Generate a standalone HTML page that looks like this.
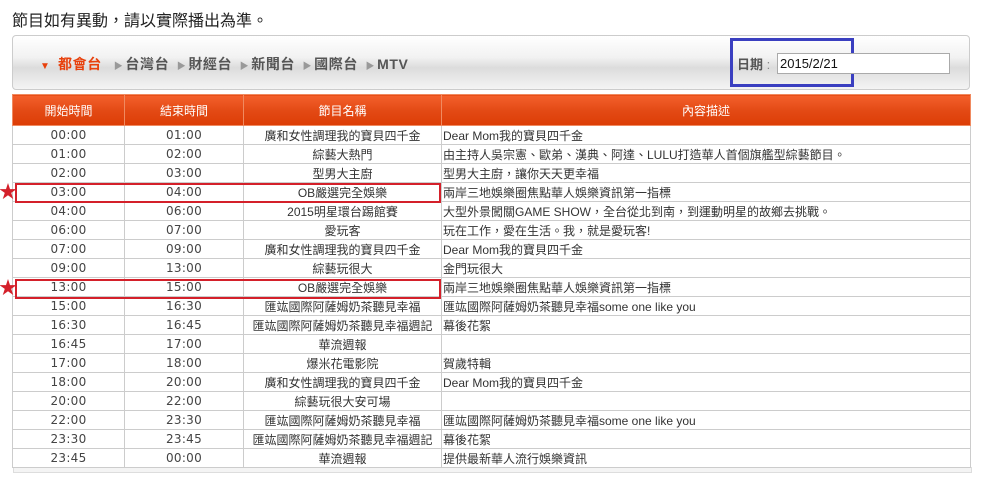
<!DOCTYPE html><html><head><meta charset="utf-8"><style>
body{margin:0;background:#fff;font-family:"Liberation Sans","Noto Sans CJK TC",sans-serif;color:#333;width:981px;height:489px;overflow:hidden;position:relative}
.title{position:absolute;left:12px;top:7px;font-size:16px;color:#222}
.panel{position:absolute;left:12px;top:35px;width:956px;height:53px;border:1px solid #ccc;border-radius:4px;background:linear-gradient(#fff,#f2f2f2 40%,#dcdcdc 60%,#f4f4f4)}
.nav{position:absolute;left:40px;top:54px;font-size:14px;font-weight:bold;color:#555;letter-spacing:0.6px}
.nav span{margin-right:3px}
.nav .a{color:#e8400c}
.tri{font-size:9px;color:#999;margin-right:2px!important}
.blue{position:absolute;left:730px;top:38px;width:118px;height:43px;border:3px solid #3a3fc0}
.dl{position:absolute;left:737px;top:54px;font-size:13px;font-weight:bold;color:#555}
.inp{position:absolute;left:777px;top:53px;border:1px solid #aaa;background:#fff;font-size:13px;line-height:19px;color:#111;padding-left:2px;box-sizing:border-box;width:173px;height:21px}
table{position:absolute;left:12px;top:94px;border-collapse:collapse;width:959px;font-size:12px}
th{height:30px;padding:0;background:linear-gradient(#f4602c,#e34a15 50%,#dc3c05);color:#fff;font-weight:normal;border:1px solid #f08a60;font-size:12px}
td{height:18px;border:1px solid #ccc;padding:0;text-align:center;color:#333;white-space:nowrap}
td.t{font-family:"DejaVu Sans",sans-serif;font-size:12px;letter-spacing:.3px;color:#444}
td.d{text-align:left;padding-left:1px}
.box{position:absolute;left:15px;width:422px;height:16px;border:2px solid #d4202a}
.star{position:absolute;left:-1px;color:#d4202a;font-size:18px;line-height:18px}
.shadow{position:absolute;left:13px;top:467px;width:957px;height:5px;border:1px solid #ddd;border-top:none;background:#f4f4f4}
</style></head><body>
<div class="title">節目如有異動，請以實際播出為準。</div>
<div class="panel"></div>
<div class="nav"><span class="a"><span style="font-size:10px">▼</span> 都會台</span>&nbsp;&nbsp;<span class="tri">▶</span><span>台灣台</span> <span class="tri">▶</span><span>財經台</span> <span class="tri">▶</span><span>新聞台</span> <span class="tri">▶</span><span>國際台</span> <span class="tri">▶</span><span>MTV</span></div>
<div class="blue"></div>
<div class="dl">日期 <span style="font-weight:normal;color:#888">:</span></div>
<div class="inp">2015/2/21</div>
<div class="shadow"></div>
<table>
<colgroup><col style="width:112px"><col style="width:119px"><col style="width:198px"><col></colgroup>
<tr><th>開始時間</th><th>結束時間</th><th>節目名稱</th><th>內容描述</th></tr>
<tr><td class="t">00:00</td><td class="t">01:00</td><td>廣和女性調理我的寶貝四千金</td><td class="d">Dear Mom我的寶貝四千金</td></tr>
<tr><td class="t">01:00</td><td class="t">02:00</td><td>綜藝大熱門</td><td class="d">由主持人吳宗憲、歐弟、漢典、阿達、LULU打造華人首個旗艦型綜藝節目。</td></tr>
<tr><td class="t">02:00</td><td class="t">03:00</td><td>型男大主廚</td><td class="d">型男大主廚，讓你天天更幸福</td></tr>
<tr><td class="t">03:00</td><td class="t">04:00</td><td>OB嚴選完全娛樂</td><td class="d">兩岸三地娛樂圈焦點華人娛樂資訊第一指標</td></tr>
<tr><td class="t">04:00</td><td class="t">06:00</td><td>2015明星環台踢館賽</td><td class="d">大型外景闖關GAME SHOW，全台從北到南，到運動明星的故鄉去挑戰。</td></tr>
<tr><td class="t">06:00</td><td class="t">07:00</td><td>愛玩客</td><td class="d">玩在工作，愛在生活。我，就是愛玩客!</td></tr>
<tr><td class="t">07:00</td><td class="t">09:00</td><td>廣和女性調理我的寶貝四千金</td><td class="d">Dear Mom我的寶貝四千金</td></tr>
<tr><td class="t">09:00</td><td class="t">13:00</td><td>綜藝玩很大</td><td class="d">金門玩很大</td></tr>
<tr><td class="t">13:00</td><td class="t">15:00</td><td>OB嚴選完全娛樂</td><td class="d">兩岸三地娛樂圈焦點華人娛樂資訊第一指標</td></tr>
<tr><td class="t">15:00</td><td class="t">16:30</td><td>匯竑國際阿薩姆奶茶聽見幸福</td><td class="d">匯竑國際阿薩姆奶茶聽見幸福some one like you</td></tr>
<tr><td class="t">16:30</td><td class="t">16:45</td><td>匯竑國際阿薩姆奶茶聽見幸福週記</td><td class="d">幕後花絮</td></tr>
<tr><td class="t">16:45</td><td class="t">17:00</td><td>華流週報</td><td class="d"></td></tr>
<tr><td class="t">17:00</td><td class="t">18:00</td><td>爆米花電影院</td><td class="d">賀歲特輯</td></tr>
<tr><td class="t">18:00</td><td class="t">20:00</td><td>廣和女性調理我的寶貝四千金</td><td class="d">Dear Mom我的寶貝四千金</td></tr>
<tr><td class="t">20:00</td><td class="t">22:00</td><td>綜藝玩很大安可場</td><td class="d"></td></tr>
<tr><td class="t">22:00</td><td class="t">23:30</td><td>匯竑國際阿薩姆奶茶聽見幸福</td><td class="d">匯竑國際阿薩姆奶茶聽見幸福some one like you</td></tr>
<tr><td class="t">23:30</td><td class="t">23:45</td><td>匯竑國際阿薩姆奶茶聽見幸福週記</td><td class="d">幕後花絮</td></tr>
<tr><td class="t">23:45</td><td class="t">00:00</td><td>華流週報</td><td class="d">提供最新華人流行娛樂資訊</td></tr>
</table>
<div class="box" style="top:183px"></div><div class="star" style="top:183px">★</div>
<div class="box" style="top:279px"></div><div class="star" style="top:279px">★</div>
</body></html>
